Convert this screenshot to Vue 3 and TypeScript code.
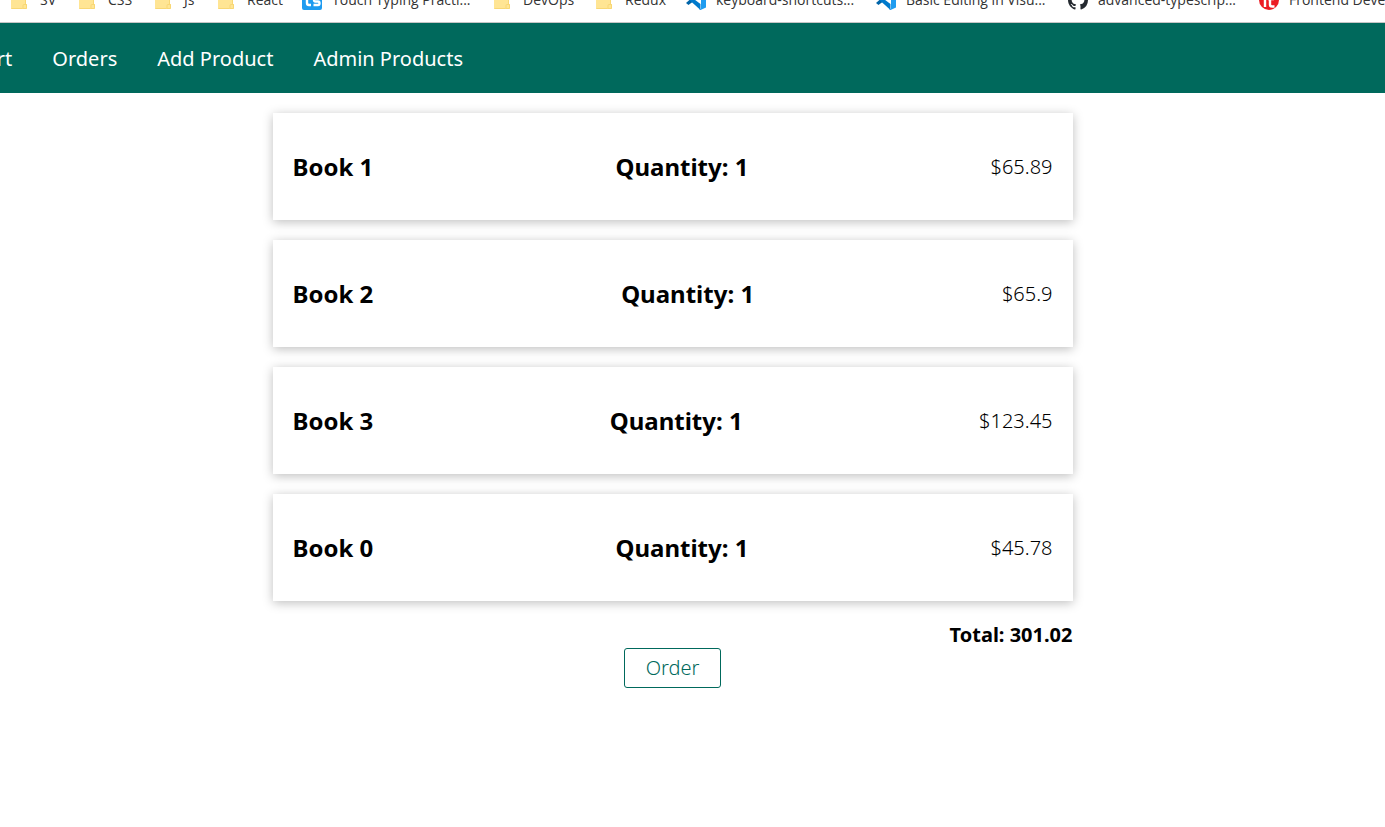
<script setup lang="ts">
type IconName = 'folder' | 'typing' | 'vscode' | 'github' | 'round'

interface Bookmark {
  label: string
  icon: IconName
}

interface OrderItem {
  title: string
  quantity: number
  price: number
}

const bookmarks: Bookmark[] = [
  { label: 'SV', icon: 'folder' },
  { label: 'CSS', icon: 'folder' },
  { label: 'Js', icon: 'folder' },
  { label: 'React', icon: 'folder' },
  { label: 'Touch Typing Practi...', icon: 'typing' },
  { label: 'DevOps', icon: 'folder' },
  { label: 'Redux', icon: 'folder' },
  { label: 'keyboard-shortcuts...', icon: 'vscode' },
  { label: 'Basic Editing in Visu...', icon: 'vscode' },
  { label: 'advanced-typescrip...', icon: 'github' },
  { label: 'Frontend Developer', icon: 'round' },
]

const links: string[] = ['Cart', 'Orders', 'Add Product', 'Admin Products']

const items: OrderItem[] = [
  { title: 'Book 1', quantity: 1, price: 65.89 },
  { title: 'Book 2', quantity: 1, price: 65.9 },
  { title: 'Book 3', quantity: 1, price: 123.45 },
  { title: 'Book 0', quantity: 1, price: 45.78 },
]

const total = items.reduce((sum, item) => sum + item.price, 0).toFixed(2)
</script>

<template>
  <div class="page">
    <nav class="bookmarks" aria-label="Bookmarks">
      <a v-for="mark in bookmarks" :key="mark.label" class="bookmark" href="#">
        <svg v-if="mark.icon === 'folder'" class="icon" viewBox="0 0 20 20" aria-hidden="true">
          <path d="M1 2h8l2 3h4v9h2v4.500q0 .5-.5.5h-15q-.5 0-.5-.5z" fill="#ffe594" />
          <path d="M1.500 18.500h10.500q1 0 1-1v-2q0-1 1-1h1.500v-9M13 18.500h3q.5 0 .5-.5v-3.500h-2" fill="none" stroke="#f8d775" />
        </svg>
        <svg v-else-if="mark.icon === 'typing'" class="icon" viewBox="0 0 20 20" aria-hidden="true">
          <rect width="20" height="20" rx="2" fill="#1e9bf0" />
          <path d="M5 4v9q0 2 2 2h2M3 8h5M17.500 8h-4q-1.500 0-1.500 1.800t1.500 1.700h2.500q1.500 0 1.500 1.750t-1.500 1.750h-4.500" fill="none" stroke="#fff" stroke-width="2.400" />
        </svg>
        <svg v-else-if="mark.icon === 'vscode'" class="icon" viewBox="0 0 20 20" aria-hidden="true">
          <path d="M0 13 14.500 0v6L2.500 15z" fill="#0065a9" />
          <path d="M0 7 2.500 5l12 9v6z" fill="#007acc" />
          <path d="M14.500 0 20 2.500v15L14.500 20q-1 0-1.500-1 2 .5 2-1V2q0-1.500-2-1 .5-1 1.500-1z" fill="#1f9cf0" />
        </svg>
        <svg v-else-if="mark.icon === 'github'" class="icon" viewBox="0 0 16 16" aria-hidden="true">
          <path
            fill="#24292f"
            d="M8 0C3.580 0 0 3.580 0 8c0 3.540 2.290 6.530 5.470 7.590.4.070.55-.17.55-.38 0-.19-.01-.82-.01-1.490-2.010.37-2.530-.49-2.690-.94-.09-.23-.48-.94-.82-1.130-.28-.15-.68-.52-.01-.53.63-.01 1.080.58 1.230.82.72 1.210 1.870.87 2.330.66.070-.52.28-.87.51-1.070-1.780-.2-3.640-.89-3.640-3.950 0-.87.31-1.590.82-2.150-.08-.2-.36-1.020.08-2.120 0 0 .67-.21 2.200.82a7.600 7.600 0 0 1 4 0c1.530-1.040 2.200-.82 2.200-.82.44 1.100.16 1.920.08 2.120.51.56.82 1.270.82 2.150 0 3.070-1.870 3.750-3.650 3.950.29.25.54.73.54 1.480 0 1.070-.01 1.930-.01 2.200 0 .21.15.46.55.38A8.010 8.010 0 0 0 16 8c0-4.420-3.580-8-8-8z"
          />
        </svg>
        <svg v-else class="icon" viewBox="0 0 20 20" aria-hidden="true">
          <circle cx="10" cy="10" r="10" fill="#ec1c24" />
          <path d="M6 9v8M11 5v9.500q0 2 2 2h2.500M9 9h6" fill="none" stroke="#fff" stroke-width="2.400" />
        </svg>
        <span>{{ mark.label }}</span>
      </a>
    </nav>

    <header class="navbar">
      <nav class="links" aria-label="Main">
        <a v-for="link in links" :key="link" href="#">{{ link }}</a>
      </nav>
    </header>

    <main class="orders">
      <ul class="list">
        <li v-for="item in items" :key="item.title" class="card">
          <h2>{{ item.title }}</h2>
          <h2>Quantity: {{ item.quantity }}</h2>
          <p>${{ item.price }}</p>
        </li>
      </ul>
      <p class="total">Total: {{ total }}</p>
      <button class="order" type="button">Order</button>
    </main>
  </div>
</template>

<style>
body {
  background: #fff;
}
</style>

<style scoped>
.page {
  overflow: hidden;
  color: #000;
  font-family: "Noto Sans", "Open Sans", sans-serif;
  font-size: 20px;
  line-height: 27px;
}

.bookmarks {
  display: grid;
  grid-template-columns: 68px 76px 63px 85px 191px 102px 91px 190px 192px 191px 1fr;
  align-content: end;
  height: 10px;
  padding: 0 0 12px 10px;
  overflow: hidden;
  border-bottom: 1px solid #c6c6c6;
}

.bookmark {
  display: flex;
  align-items: center;
  gap: 10px;
  height: 20px;
  color: #333;
  font-family: "Open Sans", sans-serif;
  font-size: 14px;
  line-height: 20px;
  text-decoration: none;
  white-space: nowrap;
}

.icon {
  flex: none;
  width: 20px;
  height: 20px;
}

.navbar {
  display: flex;
  align-items: center;
  height: 70px;
  background: #00695c;
}

.links {
  display: flex;
  gap: 40px;
  margin-left: -27px;
}

.links a {
  color: #fff;
  text-decoration: none;
}

.orders {
  display: flex;
  flex-direction: column;
  align-items: center;
  width: 800px;
  max-width: 100%;
  margin: 0 auto;
  padding: 20px 40px 0 0;
}

.list {
  display: flex;
  flex-direction: column;
  gap: 20px;
  width: 100%;
  margin: 0 0 20px;
  padding: 0;
  list-style: none;
}

.card {
  display: flex;
  align-items: center;
  justify-content: space-between;
  padding: 37px 20px;
  background: #fff;
  box-shadow: 0 2px 10px rgba(0, 0, 0, 0.26);
}

.card h2 {
  margin: 0;
  font-size: 24px;
  font-weight: 700;
  line-height: 33px;
}

.card p {
  margin: 0;
  font-weight: 300;
}

.total {
  align-self: flex-end;
  margin: 0;
  font-weight: 700;
}

.order {
  padding: 5px 21px;
  border: 1px solid #00695c;
  border-radius: 3px;
  background: #fff;
  color: #00695c;
  font: inherit;
  font-weight: 300;
  line-height: 28px;
  cursor: pointer;
}
</style>
